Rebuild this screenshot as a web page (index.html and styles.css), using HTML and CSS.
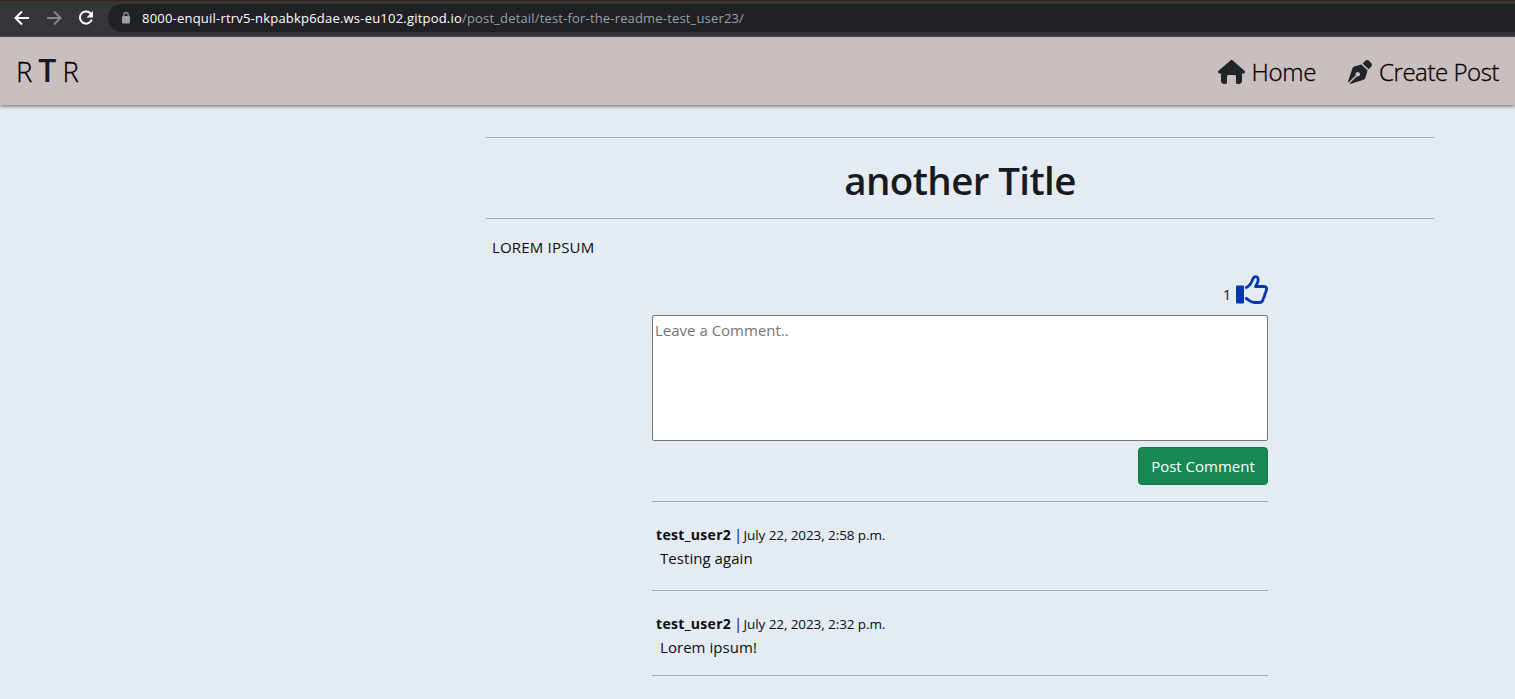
FILE: index.html
```html
<!DOCTYPE html>
<html lang="en">
<head>
<meta charset="utf-8">
<title>another Title</title>
<link rel="stylesheet" href="styles.css">
</head>
<body>
<div class="browser">
  <svg class="nav-icons" viewBox="0 0 108 37" fill="none">
    <path d="M29 18H16M22 11.500L15.500 18L22 24.500" stroke="#fff" stroke-width="2"/>
    <path d="M47 18H60M54 11.500L60.500 18L54 24.500" stroke="#85878a" stroke-width="2"/>
    <path d="M91.300 14.500A6.100 6.100 0 1 0 91.800 19.500" stroke="#fff" stroke-width="2"/>
    <path d="M93 11V17.500H86.500Z" fill="#fff"/>
  </svg>
  <div class="address">
    <svg class="lock" viewBox="0 0 10 12"><rect x="1" y="4" width="8" height="7.500" rx="1" fill="#9aa0a6"/><path d="M2.700 5V3a2.300 2.300 0 0 1 4.600 0v2" fill="none" stroke="#9aa0a6" stroke-width="1.200"/></svg>
    <span class="host">8000-enquil-rtrv5-nkpabkp6dae.ws-eu102.gitpod.io</span><span class="path">/post_detail/test-for-the-readme-test_user23/</span>
  </div>
</div>
<header class="navbar">
  <div class="brand"><span>R</span><span class="brand-t">T</span><span>R</span></div>
  <nav class="links">
    <a class="link"><svg class="home" viewBox="0 0 576 512"><path d="M575.800 255.500c0 18-15 32.100-32 32.100h-32l.7 160.200c0 35-29 64.200-64 64.200H416c-18 0-32-14-32-32V352c0-18-14-32-32-32H224c-18 0-32 14-32 32v128c0 18-14 32-32 32h-32c-35 0-64-29-64-64V287.600H32c-18 0-32-14-32-32.100 0-9 3-17 10-24L266.400 8c7-7 15-8 22-8s15 2 21 7l255.400 224.500c8 7 12 15 11 24z"/></svg><span class="home-label">Home</span></a>
    <a class="link"><svg class="pen" viewBox="0 0 512 512"><path d="M368.400 18.300 312.700 74.100 437.900 199.300l55.700-55.700c21.900-21.900 21.900-57.300 0-79.200L447.600 18.300c-21.900-21.900-57.300-21.900-79.200 0zM288 94.600l-9.200 2.800-144.100 43.200c-19.900 6-35.700 21.200-42.300 41L3.800 445.800c-3.800 11.300-1 23.900 7.300 32.400l153.600-153.600c-3-6.300-4.700-13.200-4.700-20.600 0-26.500 21.500-48 48-48s48 21.500 48 48-21.500 48-48 48c-7.400 0-14.400-1.700-20.600-4.700L33.800 500.900c8.500 8.400 21 11.200 32.400 7.400l264.300-88.600c19.700-6.600 35-22.400 41-42.300l43.200-144.100 2.700-9.200z"/></svg><span class="create-label">Create Post</span></a>
  </nav>
</header>
<main class="post">
  <div class="title-box"><h1>another Title</h1></div>
  <p class="content">LOREM IPSUM</p>
  <section class="discussion">
    <div class="likes"><span>1</span><svg class="thumb" viewBox="0 0 33 30"><rect x="1" y="10.500" width="8" height="18" rx="1" fill="#0338ac"/><path d="M11.300 12.500C14 11.200 16 8.500 17.200 5.500C18 3 18.800 1.600 20.500 1.600C23.200 1.600 23.500 4 22.900 6.500C22.400 8.500 21.300 10 20.500 11.500H29C31.500 11.500 32 13.500 31.300 15.300C31 17 30.500 18 29.800 19C29.800 21 29.300 22.500 28.300 23.300C28 26.500 26.500 27.500 24 27.500H19C16 27.500 14 25.200 11.300 23.500" fill="none" stroke="#0338ac" stroke-width="2.800" stroke-linecap="round" stroke-linejoin="round"/></svg></div>
    <textarea class="comment-input" placeholder="Leave a Comment.."></textarea>
    <button class="submit"><span>Post Comment</span></button>
    <article class="comment first"><div class="meta"><b>test_user2</b><i>|</i><time>July 22, 2023, 2:58 p.m.</time></div><p class="text-a">Testing again</p></article>
    <article class="comment second"><div class="meta"><b>test_user2</b><i>|</i><time>July 22, 2023, 2:32 p.m.</time></div><p class="text-b">Lorem ipsum!</p></article>
  </section>
</main>
</body>
</html>
```
FILE: styles.css
```css
* { box-sizing: border-box; }
body { margin: 0; height: 699px; overflow: hidden; background: #e4ebf2; color: #0b0d11; font: 15px/24px "Open Sans", "Noto Sans", sans-serif; }
h1, p { margin: 0; }
.browser { height: 37px; display: flex; background: #35363a; border-top: 1px solid #3b2119; border-bottom: 1px solid #515256; }
.nav-icons { width: 108px; height: 37px; flex: none; margin-top: -1px; }
.address { flex: 1; height: 28px; margin-top: 3px; border-radius: 14px 0 0 14px; background: #202124; display: flex; align-items: center; padding-left: 13px; font-size: 13px; white-space: nowrap; }
.lock { width: 10px; height: 12px; margin-right: 11px; }
.host { color: #fff; width: 320px; letter-spacing: .21px; }
.path { color: #9aa0a6; letter-spacing: .17px; }
.navbar { height: 68px; display: flex; justify-content: space-between; background: #cabfbf; box-shadow: 0 1px 4px rgba(0,0,0,.6); padding: 0 16px; }
.brand { display: flex; align-items: baseline; gap: 6px; font-size: 27.500px; line-height: 66px; font-weight: 300; color: #000; -webkit-text-stroke: .3px #000; }
.brand-t { font-size: 32px; font-weight: 600; color: #171a24; -webkit-text-stroke: 0; }
.links { display: flex; gap: 32px; padding-top: 1px; }
.link { display: flex; align-items: center; font-size: 24px; line-height: 70px; white-space: nowrap; font-weight: 300; color: #000; -webkit-text-stroke: .3px #000; }
.home { width: 27px; height: 24px; margin-right: 7px; fill: #212529; }
.pen { width: 24px; height: 24px; margin-right: 7px; fill: #212529; }
.home-label { letter-spacing: -.3px; }
.create-label { letter-spacing: -.45px; }
.post { width: 948px; margin: 32px 0 0 486px; }
.title-box { height: 82px; border-top: 1px solid #a4aab4; border-bottom: 1px solid #a4aab4; text-align: center; }
h1 { color: #171a1f; font-size: 38.500px; line-height: 84px; font-weight: 600; letter-spacing: -.6px; }
.content { padding: 16px 6px 0; height: 51px; letter-spacing: .18px; }
.discussion { width: 616px; margin-left: 166px; display: flex; flex-direction: column; }
.likes { height: 45px; display: flex; justify-content: flex-end; align-items: flex-start; font-size: 14px; }
.likes span { padding-top: 13px; margin-right: 4px; }
.thumb { width: 33px; height: 30px; margin-top: 5px; }
.comment-input { height: 126px; width: 616px; border: 1px solid #767676; border-radius: 2px; background: #fff; padding: 2px; resize: none; font: inherit; outline: 0; display: block; }
.comment-input::placeholder { color: #757575; opacity: 1; }
.submit { align-self: flex-end; width: 130px; height: 38px; margin: 6px 0 16px; padding: 0; border: 1px solid #087f38; border-radius: 4px; background: #198754; color: #fff; font: inherit; }
.comment { border-top: 1px solid #a4aab4; padding: 20px 4px 0; }
.first { height: 89px; }
.second { height: 86px; border-bottom: 1px solid #a4aab4; }
.meta { display: flex; align-items: baseline; white-space: nowrap; height: 24px; }
.meta b { font-weight: 700; width: 78px; font-size: 14px; letter-spacing: .32px; }
.meta i { font-style: normal; width: 9.500px; }
.meta time { font-size: 13.500px; letter-spacing: -.09px; }
.comment p { padding-left: 4px; letter-spacing: .05px; }
```
